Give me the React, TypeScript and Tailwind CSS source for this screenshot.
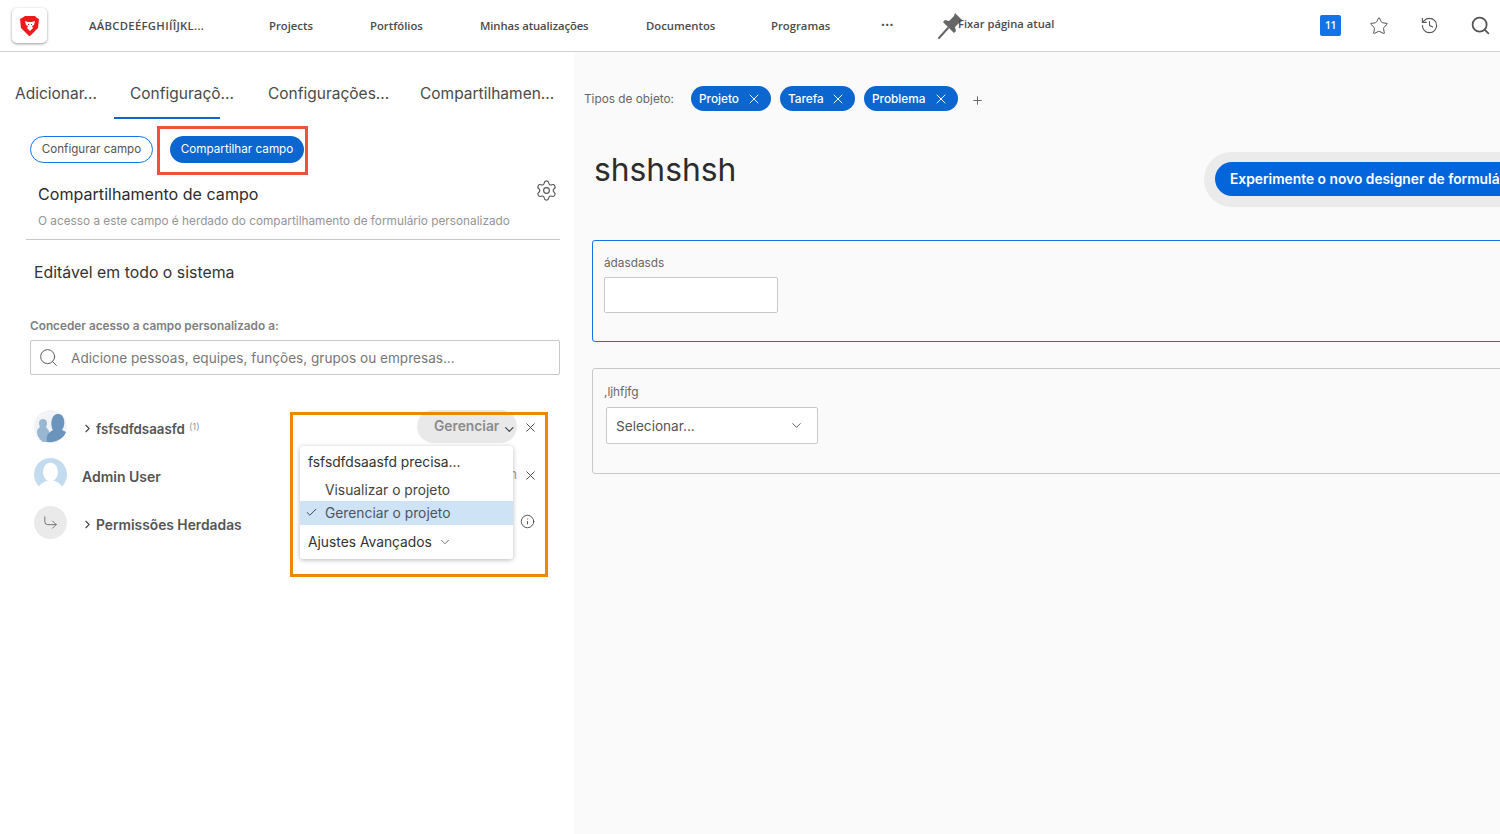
import { Check, ChevronDown, ChevronRight, CornerDownRight, History, Info, Plus, Search, Settings, Star, X } from "lucide-react";

function Logo() {
  return (
    <svg width="20" height="22" viewBox="0 0 20 22">
      <path d="M5 1h10l2 2 2 1-1 9-8 8h-.5h-.5l-8-8-1-9 2-1z" fill="#f0191c" />
      <path d="M5 6l3 1h4l3-1-1 4-2 1 1 2-3 3-3-3 1-2-2-1z" fill="#fff" />
      <path d="M8 9h1v1H8zM11 9h1v1h-1z" fill="#f0191c" />
    </svg>
  );
}

function Pin() {
  return (
    <svg width="28" height="28" viewBox="0 0 28 28">
      <path d="M2 26l9-10" stroke="#666" strokeWidth="2" strokeLinecap="round" />
      <path d="M18 1l8 8-3 1-5 5 1 4-2 2-11-11 2-2 4 1 5-5z" fill="#666" />
    </svg>
  );
}

function NavItem({ w, children }: { w: string; children: React.ReactNode }) {
  return <div className={`${w} mt-[2px] text-[11.300px] font-semibold text-[#4b4b4b] font-['Open_Sans',sans-serif] whitespace-nowrap`}>{children}</div>;
}

function Chip({ label, w }: { label: string; w: string }) {
  return (
    <div className={`${w} h-[25px] rounded-full bg-[#0b66d0] text-white text-[11.800px] font-medium flex items-center justify-between pl-[8px] pr-[9px]`}>
      <span className="mt-[2px]">{label}</span>
      <X size={16} strokeWidth={1.4} />
    </div>
  );
}

function GroupAvatar() {
  return (
    <svg width="33" height="33" viewBox="0 0 33 33">
      <circle cx="16.500" cy="16.500" r="16.500" fill="#f1f4f7" />
      <path d="M3 22c0-3 2-4 3-5-2-4-1-8 3-8s5 4 3 8l3 4v11H9c-3-2-6-6-6-10z" fill="#9ab7d2" />
      <path d="M13 32c-1-5 0-9 6-12-3-5-2-16 5-16s8 11 4 16l4 2c-2 6-9 11-19 10z" fill="#6a94bb" />
    </svg>
  );
}

function UserAvatar() {
  return (
    <svg width="33" height="33" viewBox="0 0 33 33">
      <clipPath id="ua">
        <rect x="0" y="0" width="33" height="28" />
      </clipPath>
      <g clipPath="url(#ua)">
        <circle cx="16.500" cy="16.500" r="16.500" fill="#c3dbee" />
        <ellipse cx="16.500" cy="14" rx="7.500" ry="9.500" fill="#fff" />
        <path d="M4 33c0-6 4-8 8-10h9c4 2 8 4 8 10z" fill="#fff" />
      </g>
    </svg>
  );
}

export default function App() {
  return (
    <div className="h-[834px] w-[1500px] flex flex-col overflow-hidden bg-white font-['Inter',sans-serif] text-[#2c2c2c]">
      <header className="h-[52px] shrink-0 border-b border-[#d3d3d3] flex items-center pl-[12px] bg-white">
        <div className="w-[77px] shrink-0">
          <div className="w-[35px] h-[35px] rounded-[5px] bg-white shadow-[0_1px_3px_rgba(0,0,0,0.4)] flex items-center justify-center">
            <Logo />
          </div>
        </div>
        <NavItem w="w-[180px] tracking-[0.3px]">AÁBCDEÉFGHIÍÎJKL...</NavItem>
        <NavItem w="w-[101px]">Projects</NavItem>
        <NavItem w="w-[110px]">Portfólios</NavItem>
        <NavItem w="w-[166px] tracking-[-0.1px]">Minhas atualizações</NavItem>
        <NavItem w="w-[125px]">Documentos</NavItem>
        <NavItem w="w-[110px]">Programas</NavItem>
        <div className="w-[56px] text-[7px] text-[#4b4b4b] leading-none -mt-[3px] tracking-[0.3px]">•••</div>
        <div className="flex items-center w-[383px]">
          <Pin />
          <div className="-ml-[7px] -mt-[3px] text-[11.200px] font-semibold text-[#4b4b4b] font-['Open_Sans',sans-serif]">Fixar página atual</div>
        </div>
        <div className="w-[21px] h-[21px] rounded-[2px] bg-[#1473e6] text-white text-[10.500px] pt-[1px] font-semibold font-['Open_Sans',sans-serif] tracking-[-0.5px] flex items-center justify-center -mt-[1px]">11</div>
        <Star size={20} strokeWidth={1.2} className="ml-[28px] text-[#555]" />
        <History size={19} strokeWidth={1.4} className="ml-[31px] text-[#555]" />
        <Search size={21} strokeWidth={2} className="ml-[31px] text-[#555]" />
      </header>

      <div className="flex flex-1 min-h-0">
        <aside className="w-[574px] shrink-0 bg-white flex flex-col">
          <nav className="h-[67px] shrink-0 flex items-start pt-[30px] text-[15.500px] text-[#4a4a4a] whitespace-nowrap">
            <div className="w-[114px] pl-[15px]">Adicionar...</div>
            <div className="w-[106px] h-[37px] pl-[16px] border-b-2 border-[#0b66d0]">Configuraçõ...</div>
            <div className="w-[152px] pl-[48px]">Configurações...</div>
            <div className="pl-[48px]">Compartilhamen...</div>
          </nav>

          <div className="flex items-center pl-[30px] h-[49px] mt-[7px] shrink-0">
            <div className="w-[123px] h-[27px] -mt-[2px] pt-[1px] rounded-full border border-[#1473e6] text-[11.600px] text-[#555] flex items-center justify-center">Configurar campo</div>
            <div className="ml-[4px] w-[151px] h-[49px] border-[3px] border-[#ee5238] flex items-center pl-[10px]">
              <div className="w-[134px] h-[27px] -mt-[2px] pt-[1px] shrink-0 rounded-full bg-[#0b66d0] text-white text-[11.700px] flex items-center justify-center">Compartilhar campo</div>
            </div>
          </div>

          <div className="relative ml-[26px] w-[534px] h-[65px] shrink-0 border-b border-[#c9c9c9] pl-[12px] pt-[9px]">
            <div className="text-[16.100px] leading-[21px] text-[#2c2c2c]">Compartilhamento de campo</div>
            <div className="mt-[8px] text-[11.800px] leading-[16px] text-[#959595]">O acesso a este campo é herdado do compartilhamento de formulário personalizado</div>
            <Settings size={23} strokeWidth={1.2} className="absolute right-[2px] top-[4px] text-[#555]" />
          </div>

          <div className="ml-[34px] mt-[22px] text-[15.850px] leading-[22px] text-[#333]">Editável em todo o sistema</div>

          <div className="ml-[30px] mt-[34px] text-[11.800px] leading-[16px] font-semibold text-[#808080]">Conceder acesso a campo personalizado a:</div>
          <div className="ml-[30px] mt-[6px] w-[530px] h-[35px] shrink-0 rounded-[2px] border border-[#c9c9c9] flex items-center pl-[7px] text-[13.600px] text-[#777]">
            <Search size={21} strokeWidth={1.1} className="text-[#555]" />
            <span className="ml-[12px] mt-[1px]">Adicione pessoas, equipes, funções, grupos ou empresas...</span>
          </div>

          <div className="relative ml-[34px] mt-[35px] w-[504px] flex flex-col gap-[15px]">
            <div className="h-[33px] flex items-center">
              <GroupAvatar />
              <ChevronRight size={13} className="ml-[14px] mt-[4px] text-[#444]" />
              <span className="ml-[2px] mt-[6px] text-[13.300px] font-semibold text-[#555]">fsfsdfdsaasfd</span>
              <span className="ml-[4px] mt-[2px] text-[9.500px] text-[#999]">(1)</span>
              <div className="ml-auto mr-[21px] w-[100px] h-[33px] rounded-full bg-[#e9e9e9] flex items-center pl-[17px] text-[13.800px] font-semibold text-[#8b8b8b]">
                <span className="-mt-[1px]">Gerenciar</span>
                <ChevronDown size={15} className="ml-[3px] mt-[6px] text-[#444]" />
              </div>
              <X size={15} strokeWidth={1.5} className="absolute right-[0px] top-[10px] text-[#444]" />
            </div>
            <div className="h-[33px] flex items-center">
              <UserAvatar />
              <span className="ml-[15px] mt-[4px] text-[14px] font-semibold text-[#555]">Admin User</span>
              <span className="ml-auto mr-[21px] text-[13.200px] text-[#999]">Admin</span>
              <X size={15} strokeWidth={1.5} className="absolute right-[0px] top-[58px] text-[#444]" />
            </div>
            <div className="h-[33px] flex items-center">
              <div className="w-[33px] h-[33px] rounded-full bg-[#eaeaea] flex items-center justify-center">
                <CornerDownRight size={17} strokeWidth={1.1} className="text-[#555]" />
              </div>
              <ChevronRight size={13} className="ml-[14px] mt-[4px] text-[#444]" />
              <span className="ml-[2px] mt-[6px] text-[13.800px] font-semibold text-[#555]">Permissões Herdadas</span>
              <Info size={15} strokeWidth={1.3} className="absolute right-[3px] top-[104px] text-[#333]" />
            </div>

            <div className="absolute left-[266px] top-[36px] w-[213px] h-[113px] bg-white rounded-[3px] shadow-[0_1px_5px_rgba(0,0,0,0.28)] text-[13.800px] text-[#444] flex flex-col">
              <div className="h-[33px] pl-[8px] pt-[7px] leading-[18px] text-[#333]">fsfsdfdsaasfd precisa...</div>
              <div className="h-[22px] pl-[25px] leading-[22px]">Visualizar o projeto</div>
              <div className="relative h-[24px] pl-[25px] leading-[24px] bg-[#cfe3f7] text-[#4b5563]">
                <Check size={13} strokeWidth={1.6} className="absolute left-[5px] top-[5px] text-[#333]" />
                Gerenciar o projeto
              </div>
              <div className="flex items-center h-[34px] pl-[8px] text-[#333]">
                <span className="mt-[1px]">Ajustes Avançados</span>
                <ChevronDown size={14} strokeWidth={1.4} className="ml-[6px] text-[#555]" />
              </div>
            </div>
            <div className="absolute left-[256px] top-[2px] w-[258px] h-[165px] border-[3px] border-[#ee8800] pointer-events-none" />
          </div>
        </aside>

        <main className="flex-1 min-w-0 overflow-hidden bg-[#fafafa] pl-[10px]">
          <div className="w-[1000px]">
            <div className="flex items-center h-[25px] mt-[34px]">
              <span className="w-[107px] mt-[2px] text-[11.800px] text-[#666]">Tipos de objeto:</span>
              <div className="flex gap-[9px]">
                <Chip label="Projeto" w="w-[80px]" />
                <Chip label="Tarefa" w="w-[75px]" />
                <Chip label="Problema" w="w-[94px]" />
              </div>
              <Plus size={13} strokeWidth={1.8} className="ml-[13px] mt-[3px] text-[#666]" />
            </div>

            <div className="flex items-start mt-[41px] h-[55px] pl-[10px]">
              <h1 className="w-[610px] shrink-0 text-[31.800px] leading-[55px] text-[#2c2c2c] -mt-[10px]">shshshsh</h1>
              <div className="w-[400px] h-[55px] shrink-0 rounded-l-full bg-[#ebebeb] pl-[11px] pt-[10px]">
                <div className="h-[34px] rounded-l-full bg-[#0265dc] text-white text-[13.800px] font-semibold pl-[15px] leading-[34px] whitespace-nowrap">Experimente o novo designer de formulário</div>
              </div>
            </div>

            <div className="ml-[8px] mt-[33px] w-[1000px] h-[102px] rounded-[3px] border border-[#1473e6] pl-[11px] pt-[14px]">
              <div className="text-[11.800px] leading-[16px] text-[#666]">ádasdasds</div>
              <div className="mt-[6px] w-[174px] h-[36px] rounded-[2px] border border-[#c9c9c9] bg-white" />
            </div>

            <div className="ml-[8px] mt-[26px] w-[1000px] h-[106px] rounded-[3px] border border-[#c9c9c9] pl-[13px] pt-[15px]">
              <div className="-ml-[2px] text-[11.800px] leading-[16px] text-[#666]">,ljhfjfg</div>
              <div className="mt-[7px] w-[212px] h-[37px] rounded-[2px] border border-[#c9c9c9] bg-white flex items-center justify-between pl-[9px] pr-[13px] text-[13.600px] text-[#555]">
                <span className="mt-[1px]">Selecionar...</span>
                <ChevronDown size={15} strokeWidth={1.5} className="text-[#555]" />
              </div>
            </div>
          </div>
        </main>
      </div>
    </div>
  );
}
